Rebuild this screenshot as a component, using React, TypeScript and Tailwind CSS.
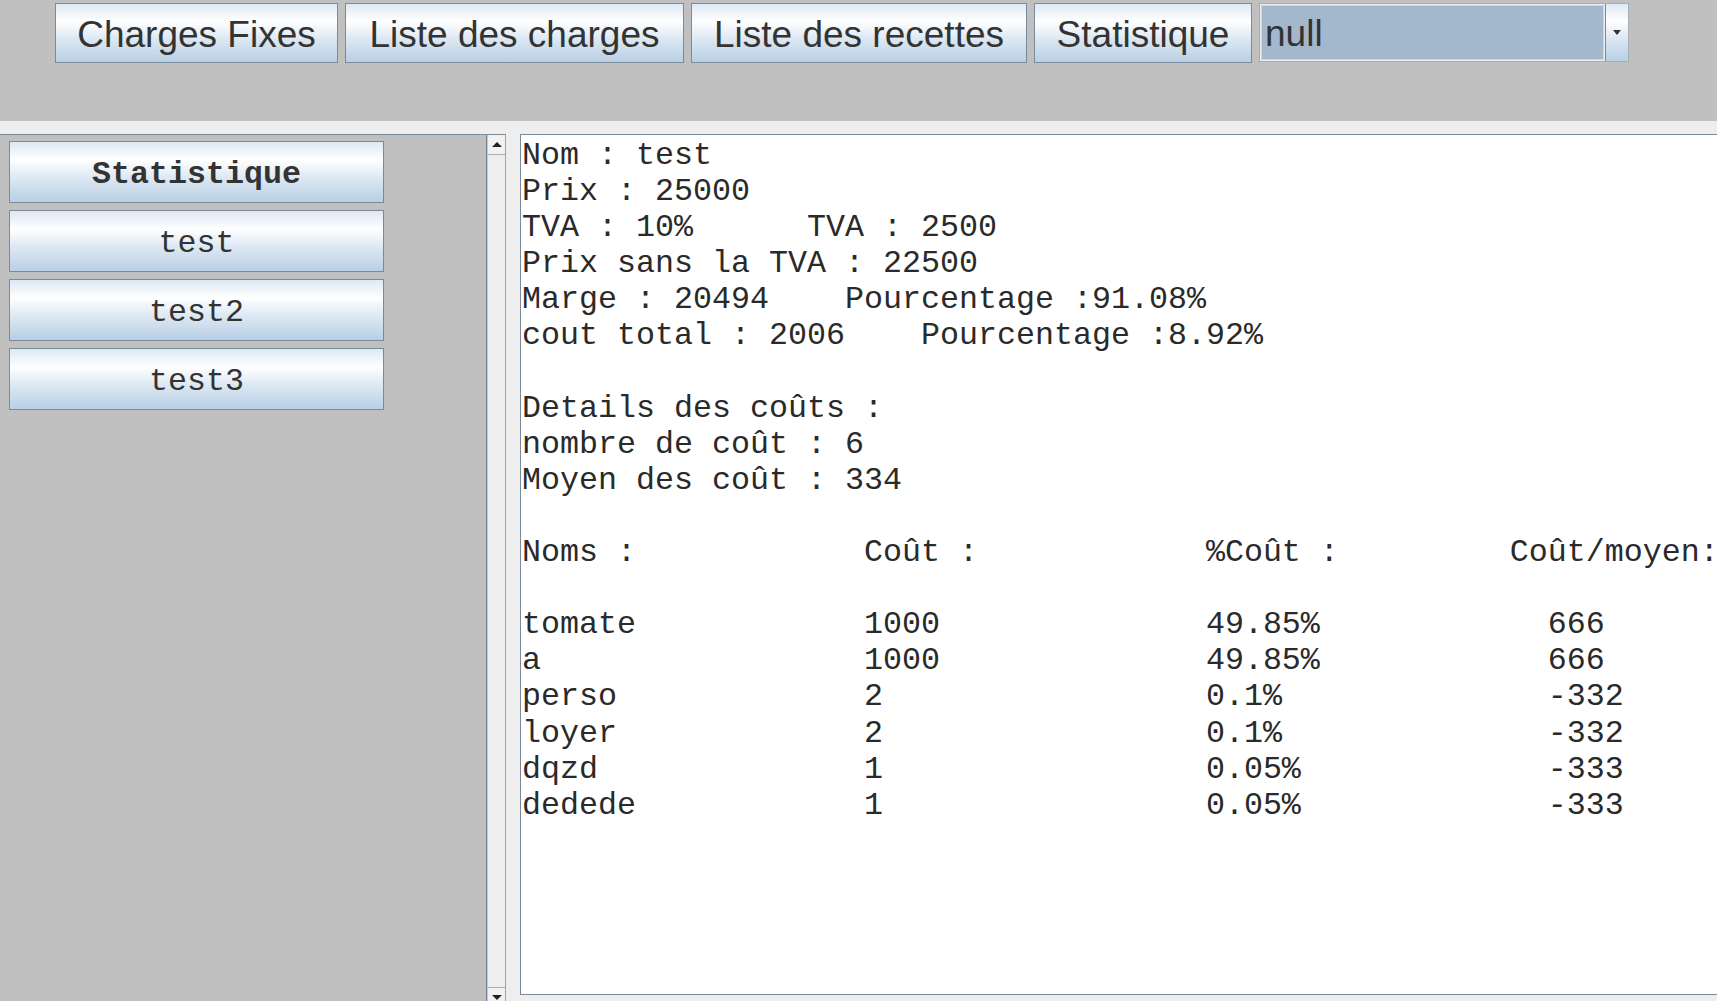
import React from "react";

const grad =
  "bg-[linear-gradient(to_bottom,#dde8f3_0%,#ffffff_30%,#dde8f3_60%,#b8cfe5_100%)]";

const pad = (s: string, n: number) => s.padEnd(n, " ");

const rows: [string, string, string, string][] = [
  ["tomate", "1000", "49.85%", "666"],
  ["a", "1000", "49.85%", "666"],
  ["perso", "2", "0.1%", "-332"],
  ["loyer", "2", "0.1%", "-332"],
  ["dqzd", "1", "0.05%", "-333"],
  ["dedede", "1", "0.05%", "-333"],
];

const lines: string[] = [
  "Nom : test",
  "Prix : 25000",
  pad("TVA : 10%", 15) + "TVA : 2500",
  "Prix sans la TVA : 22500",
  pad("Marge : 20494", 17) + "Pourcentage :91.08%",
  pad("cout total : 2006", 21) + "Pourcentage :8.92%",
  "",
  "Details des coûts :",
  "nombre de coût : 6",
  "Moyen des coût : 334",
  "",
  pad("Noms :", 18) + pad("Coût :", 18) + pad("%Coût :", 16) + "Coût/moyen:",
  "",
  ...rows.map((r) => pad(r[0], 18) + pad(r[1], 18) + pad(r[2], 18) + r[3]),
];

function TopButton({ label, w }: { label: string; w: string }) {
  return (
    <div
      className={`${w} h-[60px] shrink-0 border border-[#7a8a99] ${grad} flex items-center justify-center pt-[2px] text-[37px] leading-none text-[#333333] font-['Liberation_Sans',Arial,sans-serif]`}
    >
      {label}
    </div>
  );
}

function SideButton({ label, bold }: { label: string; bold?: boolean }) {
  return (
    <div
      className={`w-[375px] h-[62px] shrink-0 border border-[#7a8a99] ${grad} flex items-center justify-center pt-[7px] text-[31.67px] leading-none text-[#333333] font-['Liberation_Mono','Courier_New',monospace] ${
        bold ? "font-bold" : "font-normal"
      }`}
    >
      {label}
    </div>
  );
}

export default function App() {
  return (
    <div className="w-[1717px] h-[1001px] overflow-hidden bg-[#eeeeee] relative">
      {/* toolbar */}
      <div className="h-[121px] bg-[#c0c0c0] flex items-start pt-[3px] pl-[55px] gap-[7px]">
        <TopButton label="Charges Fixes" w="w-[283px]" />
        <TopButton label="Liste des charges" w="w-[339px]" />
        <TopButton label="Liste des recettes" w="w-[336px]" />
        <TopButton label="Statistique" w="w-[218px]" />
        <div className="w-[370px] h-[59px] shrink-0 flex border border-[#a5adb5] bg-[#eeeeee]">
          <div className="flex-1 m-[1px] border border-[#c9d6e3] bg-[#a3b8cc] flex items-center pl-[3px] pt-[2px] text-[37px] leading-none text-[#333333] font-['Liberation_Sans',Arial,sans-serif]">
            null
          </div>
          <div className={`w-[23px] border-l border-[#7a8a99] ${grad} flex items-center justify-center`}>
            <svg width="8" height="5" viewBox="0 0 8 5">
              <path d="M0 0 H8 L4 5 Z" fill="#333333" />
            </svg>
          </div>
        </div>
      </div>

      {/* main */}
      <div className="flex mt-[13px]">
        {/* left scroll pane */}
        <div className="w-[506px] h-[873px] shrink-0 border-t border-[#7a8a99] flex">
          <div className="w-[486px] bg-[#c0c0c0] flex flex-col gap-[7px] pt-[6px] pl-[9px]">
            <SideButton label="Statistique" bold />
            <SideButton label="test" />
            <SideButton label="test2" />
            <SideButton label="test3" />
          </div>
          <div className="w-[20px] flex flex-col border-l border-[#6f8194] border-r border-r-[#9aa4ad]">
            <div className="flex-1 flex flex-col border-l border-[#b8cfe5] bg-[#eeeeee]">
              <div className="h-[20px] shrink-0 border-b border-[#a3b1bf] bg-[#f2f2f2] flex items-center justify-center">
                <svg width="10" height="5" viewBox="0 0 10 5">
                  <path d="M0 5 L5 0 L10 5 Z" fill="#222222" />
                </svg>
              </div>
              <div className="flex-1" />
              <div className="h-[20px] shrink-0 border-t border-[#a3b1bf] bg-[#f2f2f2] flex items-center justify-center">
                <svg width="10" height="5" viewBox="0 0 10 5">
                  <path d="M0 0 L10 0 L5 5 Z" fill="#222222" />
                </svg>
              </div>
            </div>
          </div>
        </div>

        {/* text area */}
        <div className="ml-[14px] w-[1230px] h-[861px] shrink-0 bg-white border-l border-t border-b border-[#7a8a99]">
          <pre className="m-0 pl-[1px] pt-[3px] whitespace-pre text-[31.67px] leading-[36.1px] text-[#2a2a2a] font-['Liberation_Mono','Courier_New',monospace]">
            {lines.join("\n")}
          </pre>
        </div>
      </div>
    </div>
  );
}
